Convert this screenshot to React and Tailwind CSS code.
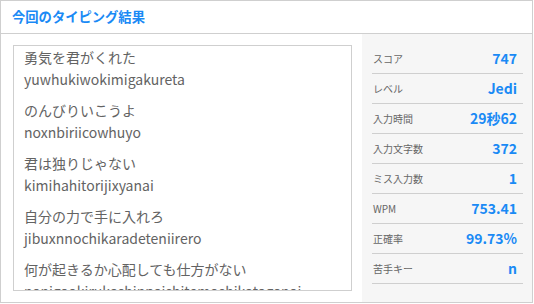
const lines = [
  ['勇気を君がくれた', 'yuwhukiwokimigakureta'],
  ['のんびりいこうよ', 'noxnbiriicowhuyo'],
  ['君は独りじゃない', 'kimihahitorijixyanai'],
  ['自分の力で手に入れろ', 'jibuxnnochikaradeteniirero'],
  ['何が起きるか心配しても仕方がない', 'nanigaokirukashinpaishitemoshikataganai'],
]

const stats = [
  ['スコア', '747'],
  ['レベル', 'Jedi'],
  ['入力時間', '29秒62'],
  ['入力文字数', '372'],
  ['ミス入力数', '1'],
  ['WPM', '753.41'],
  ['正確率', '99.73%'],
  ['苦手キー', 'n'],
]

export default function App() {
  return (
    <div className="w-[533px] h-[303px] border border-[#cfcfcf] bg-white flex flex-col font-['Noto_Sans_CJK_JP',sans-serif]">
      <div className="h-[33px] border-b border-[#cfcfcf] flex items-center pl-[11px]">
        <h2 className="text-[13.3px] font-bold text-[#1a8af5] leading-none">今回のタイピング結果</h2>
      </div>
      <div className="flex flex-1 min-h-0">
        <div className="w-[361px] pl-[12px] pr-[10px] py-[11px]">
          <div className="h-full border border-[#cfcfcf] overflow-hidden pl-[10px]">
            {lines.map(([jp, roma]) => (
              <div key={roma} className="mb-[9px] text-[14px] leading-[22px] text-[#636363] whitespace-nowrap">
                <p>{jp}</p>
                <p>{roma}</p>
              </div>
            ))}
          </div>
        </div>
        <div className="flex-1 bg-[#f6f6f6] pt-[10px] pl-[10px] pr-[9px]">
          {stats.map(([label, value]) => (
            <div key={label} className="h-[30px] border-b border-[#cfcfcf] flex items-center justify-between pl-px pr-[6px]">
              <span className="text-[10px] text-[#666]">{label}</span>
              <span className="text-[14px] font-bold text-[#1a8af5]">{value}</span>
            </div>
          ))}
        </div>
      </div>
    </div>
  )
}
